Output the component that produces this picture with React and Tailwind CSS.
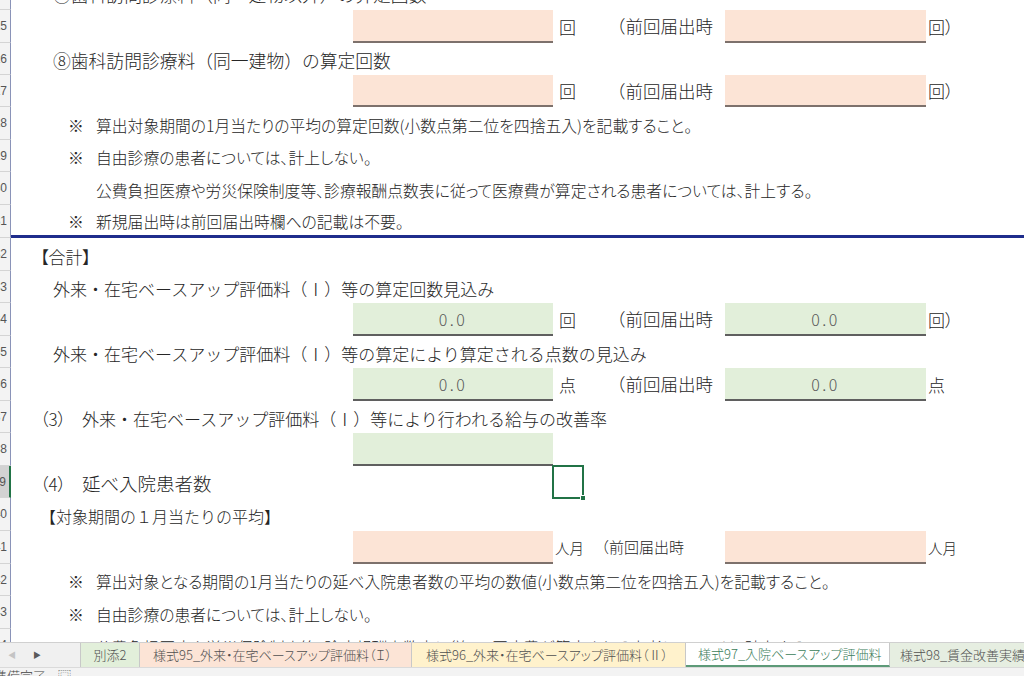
import React from 'react'

const jp = "font-['Noto_Sans_CJK_JP','Noto_Sans_CJK_SC',sans-serif]"
const palt = "[font-feature-settings:'palt']"

function Row({ n, h, rule, sel, children, className }) {
  return (
    <div className={`flex shrink-0 ${h}`}>
      <div
        className={`w-[11px] shrink-0 flex justify-end items-center overflow-hidden border-b border-[#d4d4d4] border-r ${
          sel ? 'bg-[#d2d2d2] border-r-2 border-r-[#217346]' : 'bg-[#f3f3f3] border-r-[#8a93b8]'
        } pr-[3px] text-[12px] text-[#555] font-['Liberation_Sans',sans-serif]`}
      >
        {n}
      </div>
      <div
        className={`flex-1 flex relative ${rule ? 'border-b-[3px] border-[#1f2d8c]' : ''} ${className || 'items-center'}`}
      >
        {children}
      </div>
    </div>
  )
}

function Box({ tone, value, w }) {
  const cls =
    tone === 'green'
      ? 'bg-[#e2efda] border-[#5f5f5f]'
      : 'bg-[#fce4d6] border-[#7d716c]'
  return (
    <div
      className={`${w || 'w-[200px]'} shrink-0 self-stretch border-b-2 ${cls} flex items-center justify-center text-[16px] tracking-[2.5px] font-light text-[#595959]`}
    >
      {value}
    </div>
  )
}

function Label({ pl, size, children }) {
  return (
    <span className={`${pl || 'pl-[42px]'} ${size || 'text-[17px]'} leading-none text-[#262626] pt-[3px] whitespace-nowrap`}>
      {children}
    </span>
  )
}

function Note({ mark, children }) {
  return (
    <div className={`flex items-center pt-[4px] text-[15.8px] leading-none text-[#262626] whitespace-nowrap ${palt}`}>
      <span className="pl-[57px] w-[85px] shrink-0">{mark ? '※' : ''}</span>
      <span>{children}</span>
    </div>
  )
}

function CountRow({ tone, a, b, unit, tail }) {
  return (
    <>
      <div className="w-[342px] shrink-0" />
      <Box tone={tone} value={a} />
      <span className="w-[55px] shrink-0 pl-[6px] text-[17px] text-[#262626]">{unit}</span>
      <span className="w-[117px] shrink-0 text-[17.5px] text-[#262626]">（前回届出時</span>
      <Box tone={tone} value={b} w="w-[201px]" />
      <span className={`pl-[2px] text-[17px] text-[#262626] ${palt}`}>{tail}</span>
    </>
  )
}

function Tab({ children, className }) {
  return (
    <div className={`h-full flex items-center shrink-0 border-r border-[#c8c8c8] ${className}`}>{children}</div>
  )
}

export default function App() {
  return (
    <div className={`w-[1024px] h-[676px] overflow-hidden bg-white flex flex-col font-light ${jp}`}>
      <div className="h-[642px] shrink-0 overflow-hidden flex flex-col">
        <Row n="24" h="h-[33px] -mt-[23px]">
          <Label size="text-[17.8px]">⑦歯科訪問診療料（同一建物以外）の算定回数</Label>
        </Row>
        <Row n="25" h="h-[33px]">
          <CountRow tone="peach" unit="回" tail="回）" />
        </Row>
        <Row n="26" h="h-[32px]">
          <Label size="text-[17.8px]">⑧歯科訪問診療料（同一建物）の算定回数</Label>
        </Row>
        <Row n="27" h="h-[32px]">
          <CountRow tone="peach" unit="回" tail="回）" />
        </Row>
        <Row n="28" h="h-[33px]">
          <Note mark>算出対象期間の1月当たりの平均の算定回数(小数点第二位を四捨五入)を記載すること。</Note>
        </Row>
        <Row n="29" h="h-[32px]">
          <Note mark>自由診療の患者については、計上しない。</Note>
        </Row>
        <Row n="30" h="h-[33px]">
          <Note>公費負担医療や労災保険制度等、診療報酬点数表に従って医療費が算定される患者については、計上する。</Note>
        </Row>
        <Row n="31" h="h-[33px]" rule>
          <Note mark>新規届出時は前回届出時欄への記載は不要。</Note>
        </Row>
        <Row n="32" h="h-[33px]">
          <span className={`pl-[29px] text-[17px] leading-none text-[#262626] pt-[3px] ${palt}`}>【合計】</span>
        </Row>
        <Row n="33" h="h-[32px]">
          <Label>外来・在宅ベースアップ評価料（Ⅰ）等の算定回数見込み</Label>
        </Row>
        <Row n="34" h="h-[33px]">
          <CountRow tone="green" a="0.0" b="0.0" unit="回" tail="回）" />
        </Row>
        <Row n="35" h="h-[32px]">
          <Label>外来・在宅ベースアップ評価料（Ⅰ）等の算定により算定される点数の見込み</Label>
        </Row>
        <Row n="36" h="h-[33px]">
          <CountRow tone="green" a="0.0" b="0.0" unit="点" tail="点" />
        </Row>
        <Row n="37" h="h-[32px]">
          <span className={`pl-[29px] w-[71px] shrink-0 text-[17px] leading-none text-[#262626] pt-[3px] ${palt}`}>（3）</span>
          <Label pl="pl-0">外来・在宅ベースアップ評価料（Ⅰ）等により行われる給与の改善率</Label>
        </Row>
        <Row n="38" h="h-[33px]">
          <div className="w-[342px] shrink-0" />
          <Box tone="green" value="" />
        </Row>
        <Row n="39" h="h-[32px]" sel>
          <span className={`pl-[29px] w-[71px] shrink-0 text-[17px] leading-none text-[#262626] pt-[3px] ${palt}`}>（4）</span>
          <Label pl="pl-0" size="text-[18.5px]">延べ入院患者数</Label>
          <div className="absolute left-[541px] -top-[1px] w-[32px] h-[34px] border-2 border-[#217346]">
            <div className="absolute -right-[4px] -bottom-[4px] w-[6px] h-[6px] bg-[#217346] border border-white" />
          </div>
        </Row>
        <Row n="40" h="h-[33px]">
          <Label pl="pl-[29px]" size="text-[16px]">【対象期間の１月当たりの平均】</Label>
        </Row>
        <Row n="41" h="h-[33px]">
          <div className="w-[342px] shrink-0" />
          <Box tone="peach" value="" />
          <span className="w-[41px] shrink-0 pl-[2px] text-[14.5px] text-[#262626]">人月</span>
          <span className="w-[131px] shrink-0 text-[15px] text-[#262626]">（前回届出時</span>
          <Box tone="peach" value="" w="w-[201px]" />
          <span className="pl-[2px] text-[14.5px] text-[#262626]">人月</span>
        </Row>
        <Row n="42" h="h-[32px]">
          <Note mark>算出対象となる期間の1月当たりの延べ入院患者数の平均の数値(小数点第二位を四捨五入)を記載すること。</Note>
        </Row>
        <Row n="43" h="h-[33px]">
          <Note mark>自由診療の患者については、計上しない。</Note>
        </Row>
        <Row n="44" h="h-[33px]">
          <Note>公費負担医療や労災保険制度等、診療報酬点数表に従って医療費が算定される患者については、計上する。</Note>
        </Row>
      </div>

      {/* sheet tabs */}
      <div className={`h-[25px] shrink-0 flex items-stretch bg-[#f0f0f0] border-t border-[#d0d0d0] text-[13px] text-[#505050] whitespace-nowrap ${palt}`}>
        <div className="w-[81px] shrink-0 flex items-center border-r border-[#c8c8c8]">
          <span className="pl-[8px] text-[8px] text-[#c4c4c4]">◀</span>
          <span className="pl-[17px] text-[8px] text-[#5a5a5a]">▶</span>
        </div>
        <Tab className="w-[59px] justify-center bg-[#e2efda]">別添2</Tab>
        <Tab className="w-[272px] pl-[13px] bg-[#fce4d6]">様式95_外来・在宅ベースアップ評価料（Ｉ）</Tab>
        <Tab className="w-[274px] pl-[14px] bg-[#fff2cc]">様式96_外来・在宅ベースアップ評価料（Ⅱ）</Tab>
        <Tab className="w-[204px] pl-[12px] bg-white text-[#3b7d5a] border-b-2 border-b-[#5d9a78]">様式97_入院ベースアップ評価料</Tab>
        <div className="flex-1 h-full flex items-center pl-[10px] bg-[#e6eee1] overflow-hidden">様式98_賃金改善実績報告書</div>
      </div>

      {/* status bar */}
      <div className="flex-1 bg-[#f3f3f3] border-t border-[#dadada] overflow-hidden flex items-start text-[13px] text-[#444]">
        <span className="-ml-[6px] pt-[1px] leading-none">準備完了</span>
        <span className="pl-[12px] pt-[1px] leading-none">⿴</span>
      </div>
    </div>
  )
}
